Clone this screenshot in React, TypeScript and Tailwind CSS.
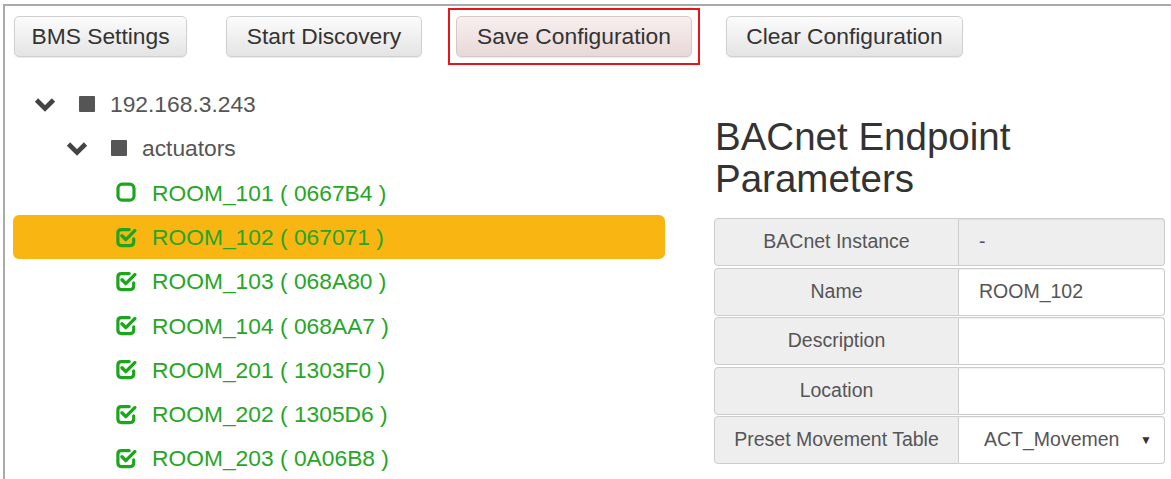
import React from "react";

const FONT = { fontFamily: '"Liberation Sans", Arial, Helvetica, sans-serif' };

function ChevronDown() {
  return (
    <svg width="22" height="15" viewBox="0 0 22 15" className="block">
      <polyline points="2.5,3 11,11.5 19.5,3" fill="none" stroke="#444" strokeWidth="4.6" strokeLinecap="butt" strokeLinejoin="miter" />
    </svg>
  );
}

function FolderSquare() {
  return <div className="w-[16px] h-[16px] bg-[#555] rounded-[1px]" />;
}

function CheckSquare() {
  return (
    <svg width="21" height="21" viewBox="0 0 21 21" className="block">
      <path d="M13.2 2.6H5.4Q1.9 2.6 1.9 6.1V15.1Q1.9 18.6 5.4 18.6H14.2Q17.7 18.6 17.7 15.1V11.8" fill="none" stroke="#1ea51e" strokeWidth="3.2" strokeLinecap="round" />
      <path d="M6 8.8L9.8 12.6L18.8 3.6" fill="none" stroke="#1ea51e" strokeWidth="3.4" strokeLinecap="round" strokeLinejoin="round" />
    </svg>
  );
}

function EmptySquare() {
  return (
    <svg width="21" height="21" viewBox="0 0 21 21" className="block">
      <rect x="2" y="2.2" width="16" height="16" rx="4.2" fill="none" stroke="#1ea51e" strokeWidth="3.2" />
    </svg>
  );
}

const btn =
  "h-[41px] rounded-[5px] border border-[#cfcfcf] text-[22.8px] text-[#333] flex items-center justify-center shadow-[0_1px_1px_rgba(0,0,0,0.08)]";

const rooms: { name: string; id: string; checked: boolean; active?: boolean }[] = [
  { name: "ROOM_101", id: "0667B4", checked: false },
  { name: "ROOM_102", id: "067071", checked: true, active: true },
  { name: "ROOM_103", id: "068A80", checked: true },
  { name: "ROOM_104", id: "068AA7", checked: true },
  { name: "ROOM_201", id: "1303F0", checked: true },
  { name: "ROOM_202", id: "1305D6", checked: true },
  { name: "ROOM_203", id: "0A06B8", checked: true },
];

function ParamRow({ label, children, readOnly }: { label: string; children?: React.ReactNode; readOnly?: boolean }) {
  return (
    <div className="flex h-[48px]">
      <div className="w-[245px] shrink-0 flex items-center justify-center bg-[#eeeeee] border border-[#cccccc] rounded-l-[4px] text-[19.5px] text-[#555]">
        {label}
      </div>
      <div
        className={`flex-1 flex items-center border border-l-0 border-[#cccccc] rounded-r-[4px] text-[19.5px] text-[#555] shadow-[inset_0_1px_1px_rgba(0,0,0,0.06)] ${
          readOnly ? "bg-[#eeeeee]" : "bg-white"
        }`}
      >
        {children}
      </div>
    </div>
  );
}

export default function App() {
  return (
    <div className="w-[1171px] h-[479px] bg-white overflow-hidden pl-[3px] pt-[4px]" style={FONT}>
      <div className="h-full border-l-2 border-t-2 border-[#aaaaaa]">
        {/* toolbar */}
        <div className="flex items-center pl-[9px] mt-[10px] h-[41px]">
          <button className={`${btn} w-[173px] bg-gradient-to-b from-[#fcfcfc] to-[#e4e4e4]`}>BMS Settings</button>
          <button className={`${btn} w-[196px] ml-[39px] bg-gradient-to-b from-[#fcfcfc] to-[#e4e4e4]`}>Start Discovery</button>
          <div className="ml-[26px] border-2 border-[#e8141b] p-[6px]">
            <button className={`${btn} w-[236px] bg-gradient-to-b from-[#f8efef] to-[#e9d8d8] border-[#d6c8c8]`}>Save Configuration</button>
          </div>
          <button className={`${btn} w-[237px] ml-[26px] bg-gradient-to-b from-[#fcfcfc] to-[#e4e4e4]`}>Clear Configuration</button>
        </div>

        <div className="flex mt-[25px]">
          {/* device tree */}
          <div className="w-[660px] pl-[8px] shrink-0 text-[22.8px]">
            <div className="h-[44.3px] flex items-center pl-[21px] text-[#555]">
              <div className="w-[45px]"><ChevronDown /></div>
              <div className="w-[31px]"><FolderSquare /></div>
              <span>192.168.3.243</span>
            </div>
            <div className="h-[44.3px] flex items-center pl-[53px] text-[#555]">
              <div className="w-[45px]"><ChevronDown /></div>
              <div className="w-[31px]"><FolderSquare /></div>
              <span>actuators</span>
            </div>
            {rooms.map((r) => (
              <div
                key={r.name}
                className={`h-[44.3px] flex items-center pl-[103px] text-[#25a625] rounded-[6px] ${
                  r.active ? "bg-[#f9b612]" : ""
                }`}
              >
                <div className="w-[36px]">{r.checked ? <CheckSquare /> : <EmptySquare />}</div>
                <span>
                  {r.name} ( {r.id} )
                </span>
              </div>
            ))}
          </div>

          {/* endpoint parameters */}
          <div className="ml-[49px] w-[451px] shrink-0">
            <h2 className="mt-[34px] text-[38.5px] leading-[42px] text-[#333] font-normal pl-[1px]">
              BACnet Endpoint
              <br />
              Parameters
            </h2>
            <div className="mt-[18px] flex flex-col gap-[1.5px]">
              <ParamRow label="BACnet Instance" readOnly>
                <span className="pl-[20px]">-</span>
              </ParamRow>
              <ParamRow label="Name">
                <span className="pl-[20px]">ROOM_102</span>
              </ParamRow>
              <ParamRow label="Description" />
              <ParamRow label="Location" />
              <ParamRow label="Preset Movement Table">
                <div className="flex items-center w-full pl-[25px] pr-[12px]">
                  <span className="flex-1">ACT_Movemen</span>
                  <span className="text-[12px] text-[#333]">▼</span>
                </div>
              </ParamRow>
            </div>
          </div>
        </div>
      </div>
    </div>
  );
}
